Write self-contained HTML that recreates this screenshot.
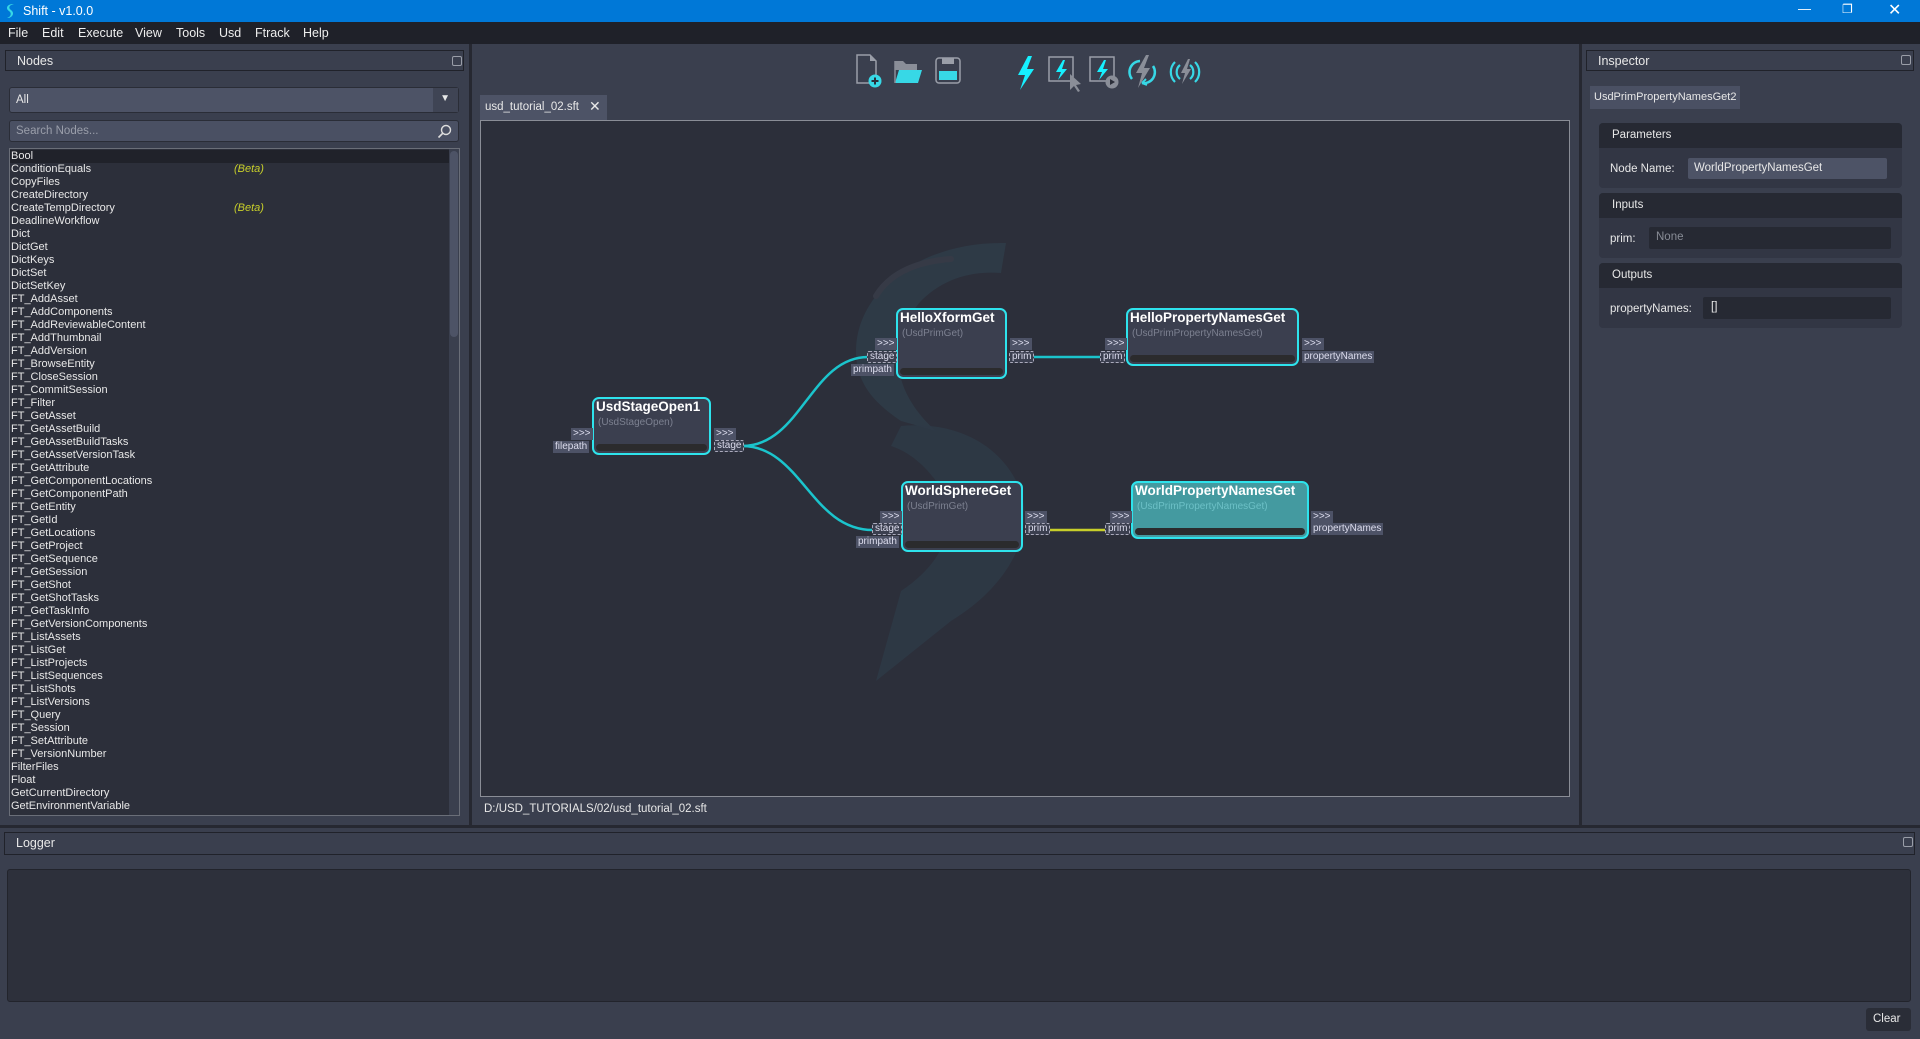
<!DOCTYPE html>
<html><head><meta charset="utf-8">
<style>
*{box-sizing:border-box;margin:0;padding:0}
html,body{width:1920px;height:1039px;overflow:hidden}
body{background:#3a3f4e;font-family:"Liberation Sans",sans-serif;font-size:12px;color:#e8e8e8;position:relative}
.abs{position:absolute}
#title{left:0;top:0;width:1920px;height:22px;background:#0078d7;color:#fff}
#menu{left:0;top:22px;width:1920px;height:22px;background:#1f2129}
#menu span{position:absolute;top:4px;font-size:12.5px;color:#eee}
.hdr{background:#3a3f4e;border:1px solid #20222a;height:21px}
.hdr span{position:absolute;left:11px;top:3px;font-size:12.5px}
.dock{position:absolute;width:10px;height:10px;border:1px solid #9a9ea8;border-radius:2px}
.list .r{height:13px;line-height:13px;padding-left:1px;font-size:11px;white-space:nowrap;position:relative}
.beta{position:absolute;left:224px;color:#c8cf2a;font-style:italic}
.node{position:absolute;border:2px solid #2ee3ec;border-radius:7px;background:#3b3f4f;overflow:hidden}
.node b{position:absolute;left:2px;top:0;font-size:13.5px;color:#fff;white-space:nowrap}
.node i{position:absolute;left:4px;top:18px;font-size:10px;color:#7c8090;font-style:normal;white-space:nowrap}
.node u{position:absolute;left:2px;right:2px;bottom:2px;height:7px;background:#2b2b2d;border-radius:4px}
.p{position:absolute;background:#4d5266;color:#dde;font-size:10px;line-height:12px;height:12px;padding:0 2px}
.pd{position:absolute;border:1px dashed #aab;color:#dde;font-size:10px;line-height:10px;height:12px;padding:0 2px;background:#3b3f4f;border-radius:2px}
.grp{position:absolute;left:1599px;width:303px;background:#323644;border-radius:4px;overflow:hidden}
.grp .gh{height:25px;background:#262933;font-size:11.5px;padding:6px 13px}
.grp .lb{position:absolute;left:11px;font-size:11.5px}
</style></head><body>
<div id="title" class="abs">
<svg class="abs" style="left:5px;top:3px" width="10" height="16"><path d="M7 1 C1 2 1 6 4 8 C7 10 6 14 2 15 L4 15 C9 13 9 9 6 7 C3 5 4 2 9 1Z" fill="#37d8e6"/></svg>
<span class="abs" style="left:23px;top:4px;font-size:12.5px">Shift - v1.0.0</span>
<span class="abs" style="left:1798px;top:1px;font-size:13px">&#8212;</span>
<span class="abs" style="left:1842px;top:2px;font-size:12px">&#10064;</span>
<span class="abs" style="left:1888px;top:0px;font-size:16px">&#10005;</span>
</div>
<div id="menu" class="abs">
<span style="left:8px">File</span><span style="left:42px">Edit</span><span style="left:78px">Execute</span><span style="left:135px">View</span><span style="left:176px">Tools</span><span style="left:219px">Usd</span><span style="left:255px">Ftrack</span><span style="left:303px">Help</span>
</div>

<div class="abs" style="left:469px;top:44px;width:3px;height:783px;background:#262831"></div>
<div class="abs hdr" style="left:5px;top:50px;width:459px;"><span>Nodes</span><div class="dock" style="left:446px;top:5px"></div></div>
<div class="abs" style="left:9px;top:87px;width:450px;height:26px;background:#4d5366;border:1px solid #2a2d37;border-radius:3px">
<span class="abs" style="left:6px;top:6px;font-size:11.5px">All</span>
<div class="abs" style="right:0;top:0;width:25px;height:24px;background:#3f4454"></div>
<span class="abs" style="right:8px;top:5px;font-size:10px">&#9660;</span></div>
<div class="abs" style="left:9px;top:120px;width:450px;height:22px;background:#4a5063;border:1px solid #2a2d37;border-radius:3px">
<span class="abs" style="left:6px;top:4px;font-size:11.5px;color:#9a9eaa">Search Nodes...</span>
<svg class="abs" style="right:6px;top:3px" width="15" height="15"><circle cx="9" cy="6" r="4.5" fill="none" stroke="#ddd" stroke-width="1.4"/><path d="M6 9 L1.5 13.5" stroke="#ddd" stroke-width="1.6"/></svg></div>
<div class="abs list" style="left:9px;top:148px;width:451px;height:668px;background:#2c2f3a;border:1px solid #6a6e78;overflow:hidden">
<div class="r" style="background:#20222a;margin-top:1px">Bool</div><div class="r">ConditionEquals<span class="beta">(Beta)</span></div><div class="r">CopyFiles</div><div class="r">CreateDirectory</div><div class="r">CreateTempDirectory<span class="beta">(Beta)</span></div><div class="r">DeadlineWorkflow</div><div class="r">Dict</div><div class="r">DictGet</div><div class="r">DictKeys</div><div class="r">DictSet</div><div class="r">DictSetKey</div><div class="r">FT_AddAsset</div><div class="r">FT_AddComponents</div><div class="r">FT_AddReviewableContent</div><div class="r">FT_AddThumbnail</div><div class="r">FT_AddVersion</div><div class="r">FT_BrowseEntity</div><div class="r">FT_CloseSession</div><div class="r">FT_CommitSession</div><div class="r">FT_Filter</div><div class="r">FT_GetAsset</div><div class="r">FT_GetAssetBuild</div><div class="r">FT_GetAssetBuildTasks</div><div class="r">FT_GetAssetVersionTask</div><div class="r">FT_GetAttribute</div><div class="r">FT_GetComponentLocations</div><div class="r">FT_GetComponentPath</div><div class="r">FT_GetEntity</div><div class="r">FT_GetId</div><div class="r">FT_GetLocations</div><div class="r">FT_GetProject</div><div class="r">FT_GetSequence</div><div class="r">FT_GetSession</div><div class="r">FT_GetShot</div><div class="r">FT_GetShotTasks</div><div class="r">FT_GetTaskInfo</div><div class="r">FT_GetVersionComponents</div><div class="r">FT_ListAssets</div><div class="r">FT_ListGet</div><div class="r">FT_ListProjects</div><div class="r">FT_ListSequences</div><div class="r">FT_ListShots</div><div class="r">FT_ListVersions</div><div class="r">FT_Query</div><div class="r">FT_Session</div><div class="r">FT_SetAttribute</div><div class="r">FT_VersionNumber</div><div class="r">FilterFiles</div><div class="r">Float</div><div class="r">GetCurrentDirectory</div><div class="r">GetEnvironmentVariable</div>
<div class="abs" style="left:439px;top:0;width:10px;height:666px;background:#3a3f4e"></div>
<div class="abs" style="left:440px;top:2px;width:8px;height:186px;background:#4d5366;border-radius:4px"></div>
</div>

<div class="abs" style="left:1579px;top:44px;width:3px;height:783px;background:#262831"></div>
<div class="abs" style="left:0;top:825px;width:1920px;height:3px;background:#262831"></div>
<svg class="abs" style="left:850px;top:50px" width="360" height="42">
<path d="M7 5 H20 L26 11 V33 H7Z" fill="none" stroke="#9a9ea8" stroke-width="1.5"/><path d="M20 5 V11 H26" fill="#9a9ea8"/>
<circle cx="25" cy="31" r="6.5" fill="#37d8e6"/><path d="M25 27.5 V34.5 M21.5 31 H28.5" stroke="#2b2e39" stroke-width="2"/>
<path d="M45 11 H53 L56 14 H67 V20 H45Z" fill="#8a8e98"/><path d="M49 20 H72 L68 33 H45Z" fill="#37d8e6"/><path d="M45 11 V33" stroke="#8a8e98" stroke-width="1.5"/>
<rect x="86" y="8" width="24" height="25" rx="3" fill="none" stroke="#9a9ea8" stroke-width="1.5"/><rect x="92" y="8" width="12" height="6" fill="#9a9ea8"/><rect x="89" y="21" width="18" height="9" fill="#37d8e6"/>
<path d="M178 6 L168 25 H175 L170 40 L184 19 H177 L182 6Z" fill="#16f0ff"/>
<rect x="199" y="7" width="24" height="24" fill="none" stroke="#9a9ea8" stroke-width="1.5"/><path d="M213 10 L206 22 H211 L208 30 L217 19 H212 L215 10Z" fill="#16f0ff"/><path d="M220 24 L220 40 L224 36 L228 42 L230 41 L226 35 L231 34Z" fill="#8a8e98"/>
<rect x="240" y="7" width="24" height="24" fill="none" stroke="#9a9ea8" stroke-width="1.5"/><path d="M254 10 L247 22 H252 L249 30 L258 19 H253 L256 10Z" fill="#16f0ff"/><circle cx="262" cy="32" r="6.5" fill="#8a8e98"/><path d="M260 29 V35 L265 32Z" fill="#2b2e39"/>
<path d="M282 29 A11 11 0 0 1 290 11" fill="none" stroke="#37d8e6" stroke-width="2.5"/><path d="M303 16 A11 11 0 0 1 292 33" fill="none" stroke="#37d8e6" stroke-width="2.5"/><path d="M292 33 l4 -4 M292 33 l5 2" stroke="#37d8e6" stroke-width="2"/>
<path d="M296 5 L286 23 H292 L288 38 L300 18 H294 L299 5Z" fill="#8a8e98"/>
<path d="M325 12 A14 14 0 0 0 325 32 M330 15 A9 9 0 0 0 330 29 M345 12 A14 14 0 0 1 345 32 M340 15 A9 9 0 0 1 340 29" fill="none" stroke="#37d8e6" stroke-width="2.2"/><path d="M338 9 L331 23 H335 L332 34 L341 19 H337 L340 9Z" fill="#8a8e98"/>
</svg>
<div class="abs" style="left:480px;top:95px;width:127px;height:25px;background:#4d5366">
<span class="abs" style="left:5px;top:6px;font-size:11.5px">usd_tutorial_02.sft</span><span class="abs" style="left:109px;top:3px;font-size:14px">&#10005;</span></div>
<div class="abs" style="left:480px;top:120px;width:1090px;height:677px;background:#2c2f3a;border:1px solid #8a8d96;overflow:hidden">
<svg class="abs" style="left:0;top:0" width="1090" height="677">
<path d="M525 122 C440 120 375 170 375 230 C375 260 390 280 420 300 L455 310 C410 270 405 220 440 180 C465 155 495 150 520 152Z" fill="#2e3a46"/>
<path d="M395 175 C410 150 440 140 470 138" stroke="#363a46" stroke-width="6" fill="none" stroke-linecap="round"/>
<path d="M420 305 C470 300 520 320 540 370 C555 420 520 470 470 500 L395 560 L420 470 C465 440 480 400 455 360 C440 340 425 330 410 325Z" fill="#2e3a46" opacity="0.85"/>
<path d="M261 325 C320 325 330 236 387 236" fill="none" stroke="#1bc4cc" stroke-width="2.5"/>
<path d="M261 325 C320 325 330 409 392 409" fill="none" stroke="#1bc4cc" stroke-width="2.5"/>
<path d="M553 236 H620" stroke="#1bc4cc" stroke-width="2.5"/>
<path d="M568 409 H625" stroke="#c8cf2a" stroke-width="2.5"/>
</svg>
</div>
<div class="node" style="left:592px;top:397px;width:119px;height:58px"><b>UsdStageOpen1</b><i>(UsdStageOpen)</i><u></u></div>
<div class="p" style="left:571px;top:428px">&gt;&gt;&gt;</div><div class="p" style="left:553px;top:441px">filepath</div>
<div class="p" style="left:714px;top:428px">&gt;&gt;&gt;</div><div class="pd" style="left:714px;top:440px">stage</div>
<div class="node" style="left:896px;top:308px;width:111px;height:71px"><b>HelloXformGet</b><i>(UsdPrimGet)</i><u></u></div>
<div class="p" style="left:875px;top:338px">&gt;&gt;&gt;</div><div class="pd" style="left:867px;top:351px">stage</div><div class="p" style="left:851px;top:364px">primpath</div>
<div class="p" style="left:1010px;top:338px">&gt;&gt;&gt;</div><div class="pd" style="left:1009px;top:351px">prim</div>
<div class="node" style="left:901px;top:481px;width:122px;height:71px"><b>WorldSphereGet</b><i>(UsdPrimGet)</i><u></u></div>
<div class="p" style="left:880px;top:511px">&gt;&gt;&gt;</div><div class="pd" style="left:872px;top:523px">stage</div><div class="p" style="left:856px;top:536px">primpath</div>
<div class="p" style="left:1025px;top:511px">&gt;&gt;&gt;</div><div class="pd" style="left:1025px;top:523px">prim</div>
<div class="node" style="left:1126px;top:308px;width:173px;height:58px"><b>HelloPropertyNamesGet</b><i>(UsdPrimPropertyNamesGet)</i><u></u></div>
<div class="p" style="left:1105px;top:338px">&gt;&gt;&gt;</div><div class="pd" style="left:1100px;top:351px">prim</div>
<div class="p" style="left:1302px;top:338px">&gt;&gt;&gt;</div><div class="p" style="left:1302px;top:351px">propertyNames</div>
<div class="node" style="left:1131px;top:481px;width:178px;height:58px;background:#449aa0"><b>WorldPropertyNamesGet</b><i style="color:#6cc0c6">(UsdPrimPropertyNamesGet)</i><u></u></div>
<div class="p" style="left:1110px;top:511px">&gt;&gt;&gt;</div><div class="pd" style="left:1105px;top:523px">prim</div>
<div class="p" style="left:1311px;top:511px">&gt;&gt;&gt;</div><div class="p" style="left:1311px;top:523px">propertyNames</div>
<span class="abs" style="left:484px;top:803px;font-size:11.5px">D:/USD_TUTORIALS/02/usd_tutorial_02.sft</span>

<div class="abs hdr" style="left:1586px;top:50px;width:328px"><span>Inspector</span><div class="dock" style="left:314px;top:4px"></div></div>
<div class="abs" style="left:1590px;top:86px;width:150px;height:23px;background:#4a5063;font-size:11px;padding:5px 4px;white-space:nowrap;overflow:hidden">UsdPrimPropertyNamesGet2</div>
<div class="grp" style="top:123px;height:65px"><div class="gh">Parameters</div><span class="lb" style="top:40px">Node Name:</span>
<div class="abs" style="left:89px;top:35px;width:199px;height:21px;background:#4d5366;border-radius:2px;font-size:11.5px;padding:4px 6px">WorldPropertyNamesGet</div></div>
<div class="grp" style="top:193px;height:65px"><div class="gh">Inputs</div><span class="lb" style="top:40px">prim:</span>
<div class="abs" style="left:50px;top:34px;width:242px;height:22px;background:#262933;border-radius:2px;font-size:11.5px;padding:4px 7px;color:#888c96">None</div></div>
<div class="grp" style="top:263px;height:65px"><div class="gh">Outputs</div><span class="lb" style="top:40px">propertyNames:</span>
<div class="abs" style="left:104px;top:34px;width:188px;height:22px;background:#262933;border-radius:2px;font-size:11.5px;padding:4px 8px">[]</div></div>

<div class="abs hdr" style="left:4px;top:832px;width:1911px;height:23px"><span>Logger</span><div class="dock" style="left:1898px;top:4px"></div></div>
<div class="abs" style="left:7px;top:869px;width:1904px;height:133px;background:#2d303b;border:1px solid #22242c;border-radius:3px"></div>
<div class="abs" style="left:1866px;top:1008px;width:45px;height:23px;background:#2a2d37;border-radius:3px;font-size:11.5px;padding:5px 7px">Clear</div>
</body></html>
